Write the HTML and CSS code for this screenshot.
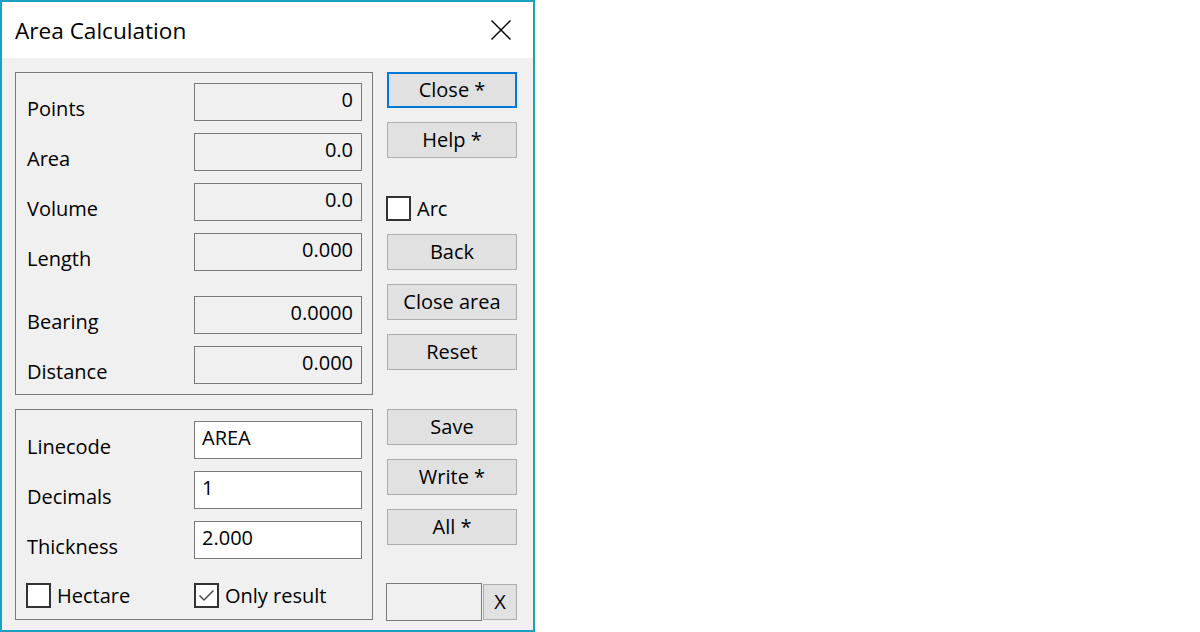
FILE: index.html
```html
<!DOCTYPE html>
<html lang="en">
<head>
  <meta charset="UTF-8">
  <title>Area Calculation</title>
  <link rel="stylesheet" href="styles.css">
</head>
<body>
  <div class="dialog">
    <div class="titlebar">
      <span class="title">Area Calculation</span>
      <button class="close-x" title="Close">
        <svg width="20" height="20" viewBox="0 0 20 20"><path d="M0.5 0.5L19.5 19.5M19.5 0.5L0.5 19.5" stroke="#000" stroke-width="1.4" fill="none"/></svg>
      </button>
    </div>
    <div class="content">
      <div class="left">
        <div class="group">
          <div class="row"><span class="label">Points</span><input class="field readonly" value="0" readonly></div>
          <div class="row"><span class="label">Area</span><input class="field readonly" value="0.0" readonly></div>
          <div class="row"><span class="label">Volume</span><input class="field readonly" value="0.0" readonly></div>
          <div class="row"><span class="label">Length</span><input class="field readonly" value="0.000" readonly></div>
          <div class="row spaced"><span class="label">Bearing</span><input class="field readonly" value="0.0000" readonly></div>
          <div class="row"><span class="label">Distance</span><input class="field readonly" value="0.000" readonly></div>
        </div>
        <div class="group settings">
          <div class="row"><span class="label">Linecode</span><input class="field" value="AREA"></div>
          <div class="row"><span class="label">Decimals</span><input class="field" value="1"></div>
          <div class="row"><span class="label">Thickness</span><input class="field" value="2.000"></div>
          <div class="checks">
            <label class="checkbox"><span class="box"></span>Hectare</label>
            <label class="checkbox wide"><span class="box"><svg width="21" height="21" viewBox="0 0 21 21"><path d="M3.5 10.5L8 15L17.5 5.5" stroke="#4a4a4a" stroke-width="1.5" fill="none"/></svg></span>Only result</label>
          </div>
        </div>
      </div>
      <div class="right">
        <div class="stack">
          <button class="btn default">Close *</button>
          <button class="btn">Help *</button>
        </div>
        <label class="checkbox arc"><span class="box"></span>Arc</label>
        <div class="stack after-arc">
          <button class="btn">Back</button>
          <button class="btn">Close area</button>
          <button class="btn">Reset</button>
        </div>
        <div class="stack after-reset">
          <button class="btn">Save</button>
          <button class="btn">Write *</button>
          <button class="btn">All *</button>
        </div>
        <div class="bottom-row">
          <input class="small-field" readonly>
          <button class="btn x-btn">X</button>
        </div>
      </div>
    </div>
  </div>
</body>
</html>
```

FILE: styles.css
```css
*{
  box-sizing: border-box;
}

body{
  margin: 0;
  background: #fff;
  font-family: "Open Sans", "Noto Sans", sans-serif;
  color: #000;
}

.dialog{
  width: 535px;
  height: 632px;
  border: 2px solid #1ba0c2;
  background: #f0f0f0;
  display: flex;
  flex-direction: column;
  overflow: hidden;
}

.titlebar{
  height: 56px;
  flex: none;
  background: #fff;
  display: flex;
  align-items: center;
  justify-content: space-between;
  padding-left: 13px;
}

.title{
  font-size: 22.6px;
}

.close-x{
  appearance: none;
  border: none;
  background: none;
  padding: 0;
  width: 20px;
  height: 20px;
  margin-right: 22px;
  display: block;
}

.close-x svg{
  display: block;
}

.content{
  flex: 1;
  display: flex;
  gap: 14px;
  padding: 14px 16px 10px 13px;
}

.left{
  width: 358px;
  display: flex;
  flex-direction: column;
  gap: 14px;
}

.group{
  border: 1px solid #7a7a7a;
  padding: 10px 10px 10px 11px;
  display: flex;
  flex-direction: column;
  gap: 12px;
}

.group.settings{
  padding-top: 11px;
  padding-bottom: 11px;
}

.row{
  height: 38px;
  display: flex;
  align-items: flex-end;
  justify-content: space-between;
}

.row.spaced{
  margin-top: 13px;
}

.label{
  font-size: 20px;
  line-height: 24px;
}

.field{
  width: 168px;
  height: 38px;
  border: 1px solid #7a7a7a;
  background: #fff;
  font-family: inherit;
  font-size: 20px;
  color: #000;
  padding: 0 8px 6px 7px;
  margin: 0;
  outline: none;
}

.field.readonly{
  background: #f0f0f0;
  text-align: right;
}

.checks{
  margin-top: 12px;
  margin-left: -1px;
  display: flex;
  justify-content: space-between;
}

.checkbox{
  display: flex;
  align-items: center;
  gap: 6px;
  font-size: 20px;
  line-height: 25px;
}

.checkbox.wide{
  width: 168px;
}

.box{
  width: 25px;
  height: 25px;
  border: 2px solid #333;
  background: #fff;
  flex: none;
}

.box svg{
  display: block;
}

.right{
  width: 130px;
  display: flex;
  flex-direction: column;
}

.stack{
  display: flex;
  flex-direction: column;
  gap: 14px;
}

.btn{
  appearance: none;
  height: 36px;
  border: 1px solid #adadad;
  background: #e1e1e1;
  font-family: inherit;
  font-size: 20px;
  color: #000;
  padding: 0 0 2px;
  margin: 0;
}

.btn.default{
  border: 2px solid #0078d7;
}

.checkbox.arc{
  margin-top: 38px;
  margin-left: -1px;
}

.stack.after-arc{
  margin-top: 13px;
}

.stack.after-reset{
  margin-top: 39px;
}

.bottom-row{
  margin-top: 38px;
  margin-left: -1px;
  display: flex;
  align-items: center;
  gap: 1px;
}

.small-field{
  width: 96px;
  height: 38px;
  border: 1px solid #7a7a7a;
  background: #f0f0f0;
  margin: 0;
  outline: none;
}

.btn.x-btn{
  width: 34px;
  flex: none;
}
```
